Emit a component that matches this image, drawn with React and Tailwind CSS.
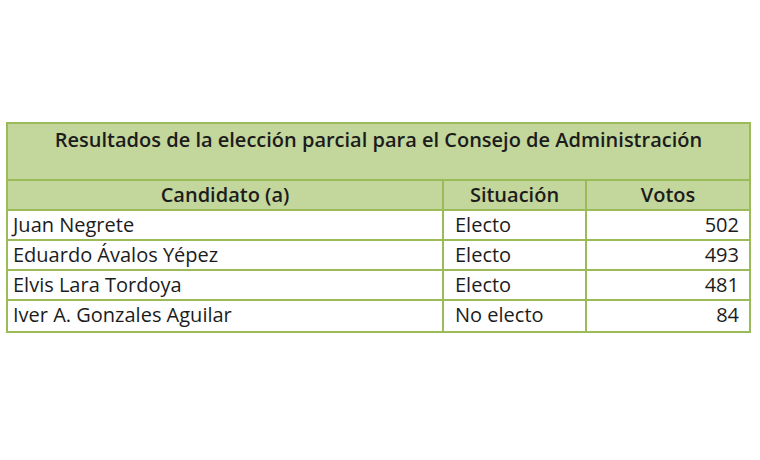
const rows = [
  { name: 'Juan Negrete', status: 'Electo', votes: 502 },
  { name: 'Eduardo Ávalos Yépez', status: 'Electo', votes: 493 },
  { name: 'Elvis Lara Tordoya', status: 'Electo', votes: 481 },
  { name: 'Iver A. Gonzales Aguilar', status: 'No electo', votes: 84 },
];

export default function App() {
  return (
    <div className="w-[760px] h-[460px] bg-white pt-[122px] pl-[6px] font-['Open_Sans','Liberation_Sans',sans-serif] text-[#1c1c1c]">
      <div className="w-[745px] border-2 border-[#9bbb59]">
        <div className="h-[57px] bg-[#c3d69b] border-b-2 border-[#9bbb59] text-center text-[20px] font-semibold leading-[28px] pt-[2px]">
          Resultados de la elección parcial para el Consejo de Administración
        </div>
        <div className="grid grid-cols-[436px_143px_1fr] h-[30px] bg-[#c3d69b] border-b-2 border-[#9bbb59] text-[20px] font-semibold leading-[28px] text-center">
          <div className="border-r-2 border-[#9bbb59]">Candidato (a)</div>
          <div className="border-r-2 border-[#9bbb59]">Situación</div>
          <div>Votos</div>
        </div>
        {rows.map((r, i) => (
          <div
            key={r.name}
            className={`grid grid-cols-[436px_143px_1fr] h-[30px] text-[20px] leading-[28px] ${i < rows.length - 1 ? 'border-b-2 border-[#9bbb59]' : ''}`}
          >
            <div className="border-r-2 border-[#9bbb59] pl-[5px]">{r.name}</div>
            <div className="border-r-2 border-[#9bbb59] pl-[11px]">{r.status}</div>
            <div className="text-right pr-[10px]">{r.votes}</div>
          </div>
        ))}
      </div>
    </div>
  );
}
